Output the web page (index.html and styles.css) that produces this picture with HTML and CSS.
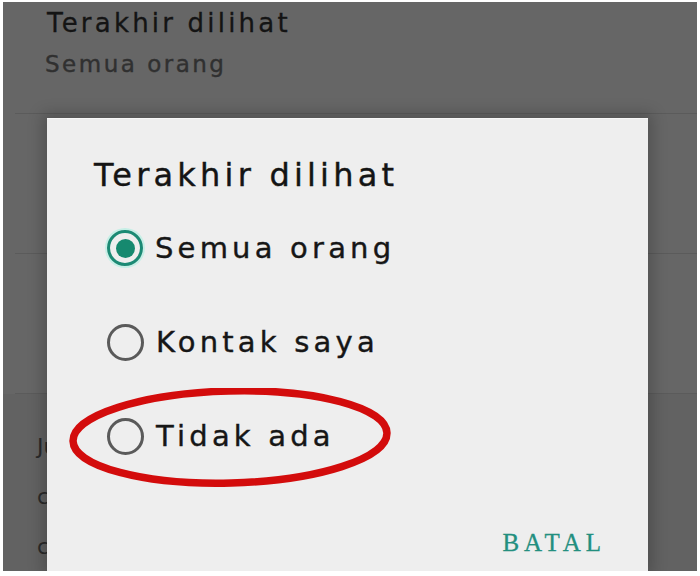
FILE: index.html
```html
<!DOCTYPE html>
<html lang="id">
    <head>
        <meta charset="UTF-8">
        <title>Privasi</title>
        <link rel="stylesheet" href="styles.css">
    </head>
    <body>
        <div class="screen">
            <div class="setting">
                <div class="setting-title">Terakhir dilihat</div>
                <div class="setting-value">Semua orang</div>
            </div>
            <div class="setting tall"></div>
            <div class="setting tall"></div>
            <div class="section">
                <div class="section-line">Jumlah</div>
                <div class="section-line">cerita</div>
                <div class="section-line">cadangan</div>
            </div>

            <div class="dialog">
                <div class="dialog-title">Terakhir dilihat</div>
                <ul class="options">
                    <li class="option">
                        <span class="radio checked"></span>
                        <span class="option-label">Semua orang</span>
                    </li>
                    <li class="option">
                        <span class="radio"></span>
                        <span class="option-label">Kontak saya</span>
                    </li>
                    <li class="option">
                        <span class="radio"></span>
                        <span class="option-label">Tidak ada</span>
                    </li>
                </ul>
                <div class="actions">
                    <span class="action">BATAL</span>
                </div>

                <!-- red marker drawn over the last option -->
                <svg class="marker" width="324" height="100" viewBox="0 0 324 100">
                    <ellipse cx="162" cy="49" rx="157" ry="46" transform="rotate(-1.5 162 49)"
                        fill="none" stroke="#d30c0c" stroke-width="7.5"/>
                </svg>
            </div>
        </div>
    </body>
</html>
```

FILE: styles.css
```css
html, body {
    margin: 0;
    background: #ffffff;
}

body {
    padding: 2px 3px 5px 3px;
    font-family: "DejaVu Sans", sans-serif;
}

.screen {
    position: relative;
    height: 569px;
    background-color: #666666;
    overflow: hidden;
}

/* Settings list behind the dialog */

.setting {
    margin-left: 12px;
    padding: 5px 0 0 32px;
    height: 106px;
    border-bottom: 1px solid #5b5b5b;
}

.setting.tall {
    height: 139px;
    padding-top: 0;
}

.setting-title {
    font-size: 26px;
    line-height: 32px;
    letter-spacing: 3.2px;
    color: #141414;
    -webkit-text-stroke: 0.3px #141414;
}

.setting-value {
    margin-top: 11px;
    margin-left: -2px;
    font-size: 23px;
    line-height: 28px;
    letter-spacing: 2.5px;
    color: #303030;
    -webkit-text-stroke: 0.4px #303030;
}

.section {
    padding: 28px 0 0 34px;
    background-color: #626262;
    height: 200px;
}

.section-line {
    font-size: 22px;
    line-height: 50px;
    color: #2a2a2a;
}

/* Dialog */

.dialog {
    position: absolute;
    left: 44px;
    top: 116px;
    width: 601px;
    bottom: 0;
    background-color: #eeeeee;
    border-top: 1px solid #f7f7f7;
    box-shadow: 0 0 14px 5px rgba(0, 0, 0, 0.2);
}

.dialog-title {
    padding: 36px 0 0 47px;
    font-size: 32px;
    line-height: 40px;
    letter-spacing: 4.2px;
    color: #141414;
    -webkit-text-stroke: 0.4px #141414;
}

.options {
    list-style: none;
    margin: 6px 0 0 0;
    padding: 0 0 0 60px;
}

.option {
    display: flex;
    align-items: center;
    gap: 12px;
    height: 94px;
}

.option-label {
    font-size: 29px;
    letter-spacing: 4.2px;
    color: #161616;
    -webkit-text-stroke: 0.4px #161616;
}

.radio {
    width: 31px;
    height: 31px;
    border: 3px solid #5a5a5a;
    border-radius: 50%;
    display: flex;
    align-items: center;
    justify-content: center;
}

.radio.checked {
    border: 3.5px solid #1b8a74;
    width: 30px;
    height: 30px;
    box-shadow: 0 0 0 2px #c6efe6;
}

.radio.checked::after {
    content: "";
    width: 19px;
    height: 19px;
    border-radius: 50%;
    background-color: #16896f;
}

.actions {
    display: flex;
    justify-content: flex-end;
    margin-top: 45px;
    padding-right: 42px;
}

.action {
    font-family: "Liberation Serif", serif;
    font-size: 25px;
    line-height: 30px;
    letter-spacing: 5px;
    color: #238f7f;
    -webkit-text-stroke: 0.3px #238f7f;
}

.marker {
    position: absolute;
    left: 21px;
    top: 269px;
}
```
